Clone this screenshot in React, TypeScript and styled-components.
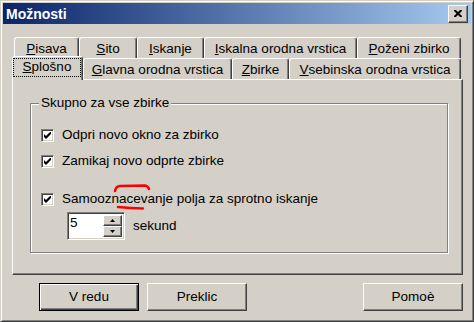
import React from "react";
import styled, { createGlobalStyle } from "styled-components";

const GlobalStyle = createGlobalStyle`
  html, body {
    margin: 0;
    padding: 0;
    background: #d4d0c8;
  }
  body {
    font-family: "Liberation Sans", Arial, sans-serif;
    font-size: 13.5px;
    color: #000;
  }
  * {
    box-sizing: border-box;
  }
`;

const Window = styled.div`
  width: 474px;
  height: 322px;
  display: flex;
  flex-direction: column;
  padding: 2px;
  background: #d4d0c8;
  border: 1px solid;
  border-color: #d4d0c8 #404040 #404040 #d4d0c8;
  box-shadow: inset 1px 1px #fff, inset -1px -1px #808080;
`;

const TitleBar = styled.div`
  display: flex;
  align-items: center;
  height: 21px;
  padding-left: 3px;
  background: linear-gradient(to right, #0a246a, #a6caf0);
`;

const Title = styled.span`
  color: #fff;
  font-weight: bold;
  font-size: 14px;
  line-height: 16px;
`;

const CloseButton = styled.div`
  display: flex;
  align-items: center;
  justify-content: center;
  width: 20px;
  height: 18px;
  margin-left: auto;
  margin-right: 3px;
  background: #d4d0c8;
  border: 1px solid;
  border-color: #fff #404040 #404040 #fff;
  box-shadow: inset -1px -1px #808080;
`;

const Body = styled.div`
  flex: 1;
  display: flex;
  flex-direction: column;
  padding: 13px 8px 8px 9px;
`;

const TabStrip = styled.div`
  display: flex;
  flex-direction: column;
  height: 42px;
`;

const TabRow = styled.div`
  display: flex;
  height: 21px;
  padding-left: 2px;
`;

const Tab = styled.div<{ $w: number; $active?: boolean }>`
  position: relative;
  display: flex;
  align-items: center;
  justify-content: center;
  width: ${(p) => (p.$active ? p.$w + 2 : p.$w)}px;
  height: ${(p) => (p.$active ? 24 : 21)}px;
  margin: ${(p) => (p.$active ? "-2px 0 -1px -2px" : "0")};
  padding-top: ${(p) => (p.$active ? 0 : 2)}px;
  z-index: ${(p) => (p.$active ? 2 : 1)};
  background: #d4d0c8;
  border-left: 1px solid #fff;
  border-top: 1px solid #fff;
  border-right: 1px solid #404040;
  border-radius: 3px 3px 0 0;
  box-shadow: inset -1px 0 #808080;
  line-height: 16px;
  white-space: nowrap;
`;

const FocusRect = styled.span`
  flex: 1;
  align-self: stretch;
  display: flex;
  align-items: center;
  justify-content: center;
  margin: 1px 1px 3px 0;
  padding-bottom: 2px;
  border: 1px dotted #000;
`;

const Key = styled.span`
  text-decoration: underline;
  text-underline-offset: 1px;
`;

const Panel = styled.div`
  height: 196px;
  padding: 23px 0 0 17px;
  border-left: 1px solid #fff;
  border-top: 1px solid #fff;
  border-right: 1px solid #404040;
  border-bottom: 1px solid #404040;
  box-shadow: inset -1px -1px #808080;
`;

const Group = styled.div`
  position: relative;
  display: flex;
  flex-direction: column;
  width: 418px;
  height: 150px;
  padding-left: 10px;
  border: 1px solid #808080;
  box-shadow: inset 1px 1px #fff, 1px 1px #fff;
`;

const Legend = styled.span`
  align-self: flex-start;
  margin: -9px 0 0 -2px;
  padding: 0 2px;
  line-height: 16px;
  background: #d4d0c8;
`;

const CheckRow = styled.div<{ $top: number }>`
  display: flex;
  align-items: center;
  gap: 8px;
  height: 16px;
  margin-top: ${(p) => p.$top}px;
  line-height: 16px;
`;

const CheckBox = styled.span`
  display: flex;
  align-items: center;
  justify-content: center;
  width: 13px;
  height: 13px;
  background: #fff;
  border: 1px solid;
  border-color: #808080 #fff #fff #808080;
  box-shadow: inset 1px 1px #404040, inset -1px -1px #d4d0c8;
`;

const SpinRow = styled.div`
  display: flex;
  align-items: center;
  gap: 8px;
  margin: 5px 0 0 26px;
  line-height: 16px;
`;

const SpinBox = styled.div`
  display: flex;
  width: 58px;
  height: 28px;
  padding: 2px;
  background: #fff;
  border: 1px solid;
  border-color: #808080 #fff #fff #808080;
  box-shadow: inset 1px 1px #404040, inset -1px -1px #d4d0c8;
`;

const SpinValue = styled.span`
  flex: 1;
  line-height: 16px;
`;

const SpinButtons = styled.div`
  display: flex;
  flex-direction: column;
  width: 19px;
`;

const SpinButton = styled.div`
  flex: 1;
  display: flex;
  align-items: center;
  justify-content: center;
  background: #d4d0c8;
  border: 1px solid;
  border-color: #fff #404040 #404040 #fff;
  box-shadow: inset -1px -1px #808080;
`;

const Marks = styled.svg`
  position: absolute;
  left: 80px;
  top: 78px;
  overflow: visible;
`;

const ButtonRow = styled.div`
  display: flex;
  gap: 8px;
  margin-top: 8px;
  padding-left: 27px;
`;

const Button = styled.div<{ $default?: boolean; $right?: boolean }>`
  display: flex;
  align-items: center;
  justify-content: center;
  width: 100px;
  height: 28px;
  margin-left: ${(p) => (p.$right ? "auto" : "0")};
  background: #d4d0c8;
  border: 1px solid;
  border-color: ${(p) =>
    p.$default ? "#000" : "#fff #404040 #404040 #fff"};
  box-shadow: ${(p) =>
    p.$default
      ? "inset 1px 1px #fff, inset -1px -1px #404040, inset -2px -2px #808080"
      : "inset -1px -1px #808080"};
  line-height: 16px;
`;

const Check = () => (
  <svg width="7" height="7" viewBox="0 0 7 7">
    <path d="M0 2 L2 4 L7 -1 L7 2 L2 7 L0 5 Z" fill="#000" />
  </svg>
);

const Arrow = ({ up }: { up?: boolean }) => (
  <svg width="5" height="3" viewBox="0 0 5 3">
    <path d={up ? "M2.5 0 L5 3 L0 3 Z" : "M0 0 L5 0 L2.5 3 Z"} fill="#000" />
  </svg>
);

const backRow: { key: string; rest: string; w: number }[] = [
  { key: "P", rest: "isava", w: 65 },
  { key: "S", rest: "ito", w: 58 },
  { key: "I", rest: "skanje", w: 67 },
  { key: "I", rest: "skalna orodna vrstica", w: 153 },
  { key: "P", rest: "oženi zbirko", w: 104 },
];

const frontRow: { key: string; rest: string; w: number }[] = [
  { key: "G", rest: "lavna orodna vrstica", w: 149 },
  { key: "Z", rest: "birke", w: 57 },
  { key: "V", rest: "sebinska orodna vrstica", w: 172 },
];

export default function App() {
  return (
    <>
      <GlobalStyle />
      <Window>
        <TitleBar>
          <Title>Možnosti</Title>
          <CloseButton>
            <svg width="8" height="7" viewBox="0 0 8 7">
              <path d="M0.5 0 L7.5 7 M7.5 0 L0.5 7" stroke="#000" strokeWidth="2" />
            </svg>
          </CloseButton>
        </TitleBar>
        <Body>
          <TabStrip>
            <TabRow>
              {backRow.map((t, i) => (
                <Tab key={i} $w={t.w}>
                  <span>
                    <Key>{t.key}</Key>
                    {t.rest}
                  </span>
                </Tab>
              ))}
            </TabRow>
            <TabRow>
              <Tab $w={69} $active>
                <FocusRect>
                  <span>
                    <Key>S</Key>plošno
                  </span>
                </FocusRect>
              </Tab>
              {frontRow.map((t, i) => (
                <Tab key={i} $w={t.w}>
                  <span>
                    <Key>{t.key}</Key>
                    {t.rest}
                  </span>
                </Tab>
              ))}
            </TabRow>
          </TabStrip>
          <Panel>
            <Group>
              <Legend>Skupno za vse zbirke</Legend>
              <CheckRow $top={16}>
                <CheckBox>
                  <Check />
                </CheckBox>
                Odpri novo okno za zbirko
              </CheckRow>
              <CheckRow $top={10}>
                <CheckBox>
                  <Check />
                </CheckBox>
                Zamikaj novo odprte zbirke
              </CheckRow>
              <CheckRow $top={22}>
                <CheckBox>
                  <Check />
                </CheckBox>
                Samooznacevanje polja za sprotno iskanje
              </CheckRow>
              <SpinRow>
                <SpinBox>
                  <SpinValue>5</SpinValue>
                  <SpinButtons>
                    <SpinButton>
                      <Arrow up />
                    </SpinButton>
                    <SpinButton>
                      <Arrow />
                    </SpinButton>
                  </SpinButtons>
                </SpinBox>
                sekund
              </SpinRow>
              <Marks width="45" height="30" viewBox="0 0 45 30">
                <path
                  d="M4 9 Q5 4 9 4 L34 3.5 Q37 4 38 7"
                  fill="none"
                  stroke="#ff0000"
                  strokeWidth="2.6"
                  strokeLinecap="round"
                />
                <path
                  d="M7 25 Q20 26 32 26.5"
                  fill="none"
                  stroke="#ff0000"
                  strokeWidth="2.4"
                  strokeLinecap="round"
                />
              </Marks>
            </Group>
          </Panel>
          <ButtonRow>
            <Button $default>V redu</Button>
            <Button>Preklic</Button>
            <Button $right>Pomoè</Button>
          </ButtonRow>
        </Body>
      </Window>
    </>
  );
}
